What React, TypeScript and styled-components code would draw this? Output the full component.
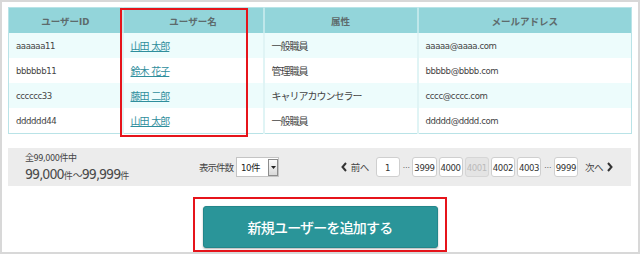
import styled, { createGlobalStyle } from "styled-components";

const GlobalStyle = createGlobalStyle`
  html, body {
    margin: 0;
    padding: 0;
    background: #fff;
  }
  body {
    font-family: "DejaVu Sans Condensed", "Noto Sans CJK JP", sans-serif;
    color: #444;
  }
`;

interface User {
  id: string;
  name: string;
  role: string;
  email: string;
}

const users: User[] = [
  { id: "aaaaaa11", name: "山田 太郎", role: "一般職員", email: "aaaaa@aaaa.com" },
  { id: "bbbbbb11", name: "鈴木 花子", role: "管理職員", email: "bbbbb@bbbb.com" },
  { id: "cccccc33", name: "藤田 二郎", role: "キャリアカウンセラー", email: "cccc@cccc.com" },
  { id: "dddddd44", name: "山田 太郎", role: "一般職員", email: "ddddd@dddd.com" },
];

const columns = [
  { label: "ユーザーID", width: 114 },
  { label: "ユーザー名", width: 141 },
  { label: "属性", width: 154 },
  { label: "メールアドレス", width: 214 },
];

type PageItem = { label: string; disabled?: boolean } | "gap";

const pages: PageItem[] = [
  { label: "1" },
  "gap",
  { label: "3999" },
  { label: "4000" },
  { label: "4001", disabled: true },
  { label: "4002" },
  { label: "4003" },
  "gap",
  { label: "9999" },
];

const App = () => {
  return (
    <>
      <GlobalStyle />
      <Frame>
        <TableWrap>
          <Table>
            <colgroup>
              {columns.map((c) => (
                <col key={c.label} style={{ width: c.width }} />
              ))}
            </colgroup>
            <thead>
              <tr>
                {columns.map((c) => (
                  <Th key={c.label}>{c.label}</Th>
                ))}
              </tr>
            </thead>
            <tbody>
              {users.map((u, i) => (
                <Row key={u.id} $striped={i % 2 === 0}>
                  <Td>{u.id}</Td>
                  <Td>
                    <NameLink href="#">{u.name}</NameLink>
                  </Td>
                  <Td $jp>{u.role}</Td>
                  <Td>{u.email}</Td>
                </Row>
              ))}
            </tbody>
          </Table>
          <Highlight />
        </TableWrap>

        <InfoBar>
          <Count>
            <CountTotal>全99,000件中</CountTotal>
            <CountRange>
              99,000<Unit>件</Unit>
              <Tilde>～</Tilde>99,999<Unit>件</Unit>
            </CountRange>
          </Count>

          <PerPage>
            <PerPageLabel>表示件数</PerPageLabel>
            <SelectBox>
              <SelectValue>10件</SelectValue>
              <SelectArrow>
                <svg width="5" height="3" viewBox="0 0 5 3">
                  <polygon points="0,0 5,0 2.5,3" fill="#222" />
                </svg>
              </SelectArrow>
            </SelectBox>
          </PerPage>

          <Pager>
            <PagerNav>
              <svg width="6" height="10" viewBox="0 0 6 10">
                <polyline points="5,1 1.5,5 5,9" fill="none" stroke="#333" strokeWidth="2" />
              </svg>
              <span>前へ</span>
            </PagerNav>
            <PageList>
              {pages.map((p, i) =>
                p === "gap" ? (
                  <PageGap key={i}>…</PageGap>
                ) : (
                  <PageBox key={i} $disabled={p.disabled}>
                    {p.label}
                  </PageBox>
                )
              )}
            </PageList>
            <PagerNav>
              <span>次へ</span>
              <svg width="6" height="10" viewBox="0 0 6 10">
                <polyline points="1,1 4.5,5 1,9" fill="none" stroke="#333" strokeWidth="2" />
              </svg>
            </PagerNav>
          </Pager>
        </InfoBar>

        <ActionArea>
          <ActionMark>
            <AddButton type="button">新規ユーザーを追加する</AddButton>
          </ActionMark>
        </ActionArea>
      </Frame>
    </>
  );
};

const Frame = styled.div`
  width: 640px;
  height: 254px;
  box-sizing: border-box;
  border: 2px solid #d8d8d8;
  padding: 5px 7px 0 6px;
  display: flex;
  flex-direction: column;
`;

const TableWrap = styled.div`
  position: relative;
`;

const Table = styled.table`
  width: 623px;
  border-collapse: collapse;
  table-layout: fixed;
  border: 1px solid #b9e3e7;
`;

const Th = styled.th`
  height: 25px;
  padding: 0;
  background: #93d5da;
  color: #5d6b6c;
  font-weight: bold;
  font-size: 9.5px;
  text-align: center;
  border-left: 2px solid #bfe7ea;

  &:first-child {
    border-left: none;
  }
`;

const Row = styled.tr<{ $striped: boolean }>`
  background: ${({ $striped }) => ($striped ? "#edfcfc" : "#fff")};
`;

const Td = styled.td<{ $jp?: boolean }>`
  height: 25px;
  padding: 0 7px;
  color: #444;
  font-size: ${({ $jp }) => ($jp ? "10px" : "9.5px")};
  letter-spacing: ${({ $jp }) => ($jp ? "-1px" : "-0.4px")};
  border-left: 2px solid #e0f4f5;
  white-space: nowrap;

  &:first-child {
    border-left: none;
  }
`;

const NameLink = styled.a`
  color: #2f8e9c;
  text-decoration: underline;
  font-size: 10px;
  letter-spacing: -1px;
  word-spacing: 1px;
`;

const Highlight = styled.div`
  position: absolute;
  left: 112px;
  top: 1px;
  width: 128px;
  height: 129px;
  box-sizing: border-box;
  border: 2px solid #e6141b;
  pointer-events: none;
`;

const InfoBar = styled.div`
  margin-top: 14px;
  height: 40px;
  background: #ececec;
  display: grid;
  grid-template-columns: 174px 1fr auto;
  align-items: center;
  padding: 0 18px 0 17px;
`;

const Count = styled.div`
  display: flex;
  flex-direction: column;
  gap: 1px;
  margin-top: 4px;
  color: #444;
`;

const CountTotal = styled.div`
  font-size: 9px;
  line-height: 11px;
  letter-spacing: -0.4px;
`;

const CountRange = styled.div`
  font-size: 14px;
  line-height: 18px;
  letter-spacing: -0.9px;
  color: #4a4a4a;
  white-space: nowrap;
`;

const Unit = styled.span`
  font-size: 9px;
  letter-spacing: 0;
`;

const Tilde = styled.span`
  font-size: 10px;
  letter-spacing: -1px;
`;

const PerPage = styled.div`
  display: flex;
  align-items: center;
  gap: 3px;
`;

const PerPageLabel = styled.span`
  font-size: 9.5px;
  letter-spacing: -1px;
  color: #444;
`;

const SelectBox = styled.div`
  width: 43px;
  height: 20px;
  box-sizing: border-box;
  border: 1px solid #c4c4c4;
  background: #fff;
  display: flex;
  align-items: center;
  justify-content: space-between;
  padding-left: 4px;
`;

const SelectValue = styled.span`
  font-size: 9.5px;
  letter-spacing: -0.4px;
  color: #222;
`;

const SelectArrow = styled.span`
  width: 10px;
  height: 17px;
  box-sizing: border-box;
  border: 1px solid #8c8c8c;
  background: linear-gradient(#fbfbfb, #d9d9d9);
  display: flex;
  align-items: center;
  justify-content: center;
`;

const Pager = styled.div`
  display: flex;
  align-items: center;
  gap: 7px;
`;

const PagerNav = styled.span`
  display: flex;
  align-items: center;
  gap: 4px;
  font-size: 9.5px;
  letter-spacing: -0.5px;
  color: #444;
`;

const PageList = styled.div`
  display: flex;
  align-items: center;
  gap: 2px;
`;

const PageBox = styled.span<{ $disabled?: boolean }>`
  min-width: 24px;
  height: 20px;
  box-sizing: border-box;
  padding: 0 1px;
  display: flex;
  align-items: center;
  justify-content: center;
  border: 1px solid ${({ $disabled }) => ($disabled ? "#d6d6d6" : "#cfcfcf")};
  border-radius: 3px;
  background: ${({ $disabled }) => ($disabled ? "#e4e4e4" : "#fff")};
  color: ${({ $disabled }) => ($disabled ? "#bbb" : "#333")};
  font-size: 9.5px;
  letter-spacing: -0.4px;
`;

const PageGap = styled.span`
  font-size: 8px;
  letter-spacing: -0.5px;
  color: #555;
  padding: 0 1px 4px;
`;

const ActionArea = styled.div`
  margin-top: 11px;
  display: flex;
  justify-content: center;
`;

const ActionMark = styled.div`
  width: 254px;
  height: 55px;
  box-sizing: border-box;
  border: 2px solid #e6141b;
  padding: 7px 7px 0 8px;
`;

const AddButton = styled.button`
  width: 235px;
  height: 42px;
  border: 1px solid #23868a;
  border-radius: 3px;
  background: #2a9599;
  box-shadow: 0 1px 2px rgba(0, 0, 0, 0.3);
  color: #fff;
  font-family: "Noto Sans CJK JP", sans-serif;
  font-size: 14px;
  font-weight: 500;
  letter-spacing: -0.8px;
  cursor: pointer;
`;

export default App;
